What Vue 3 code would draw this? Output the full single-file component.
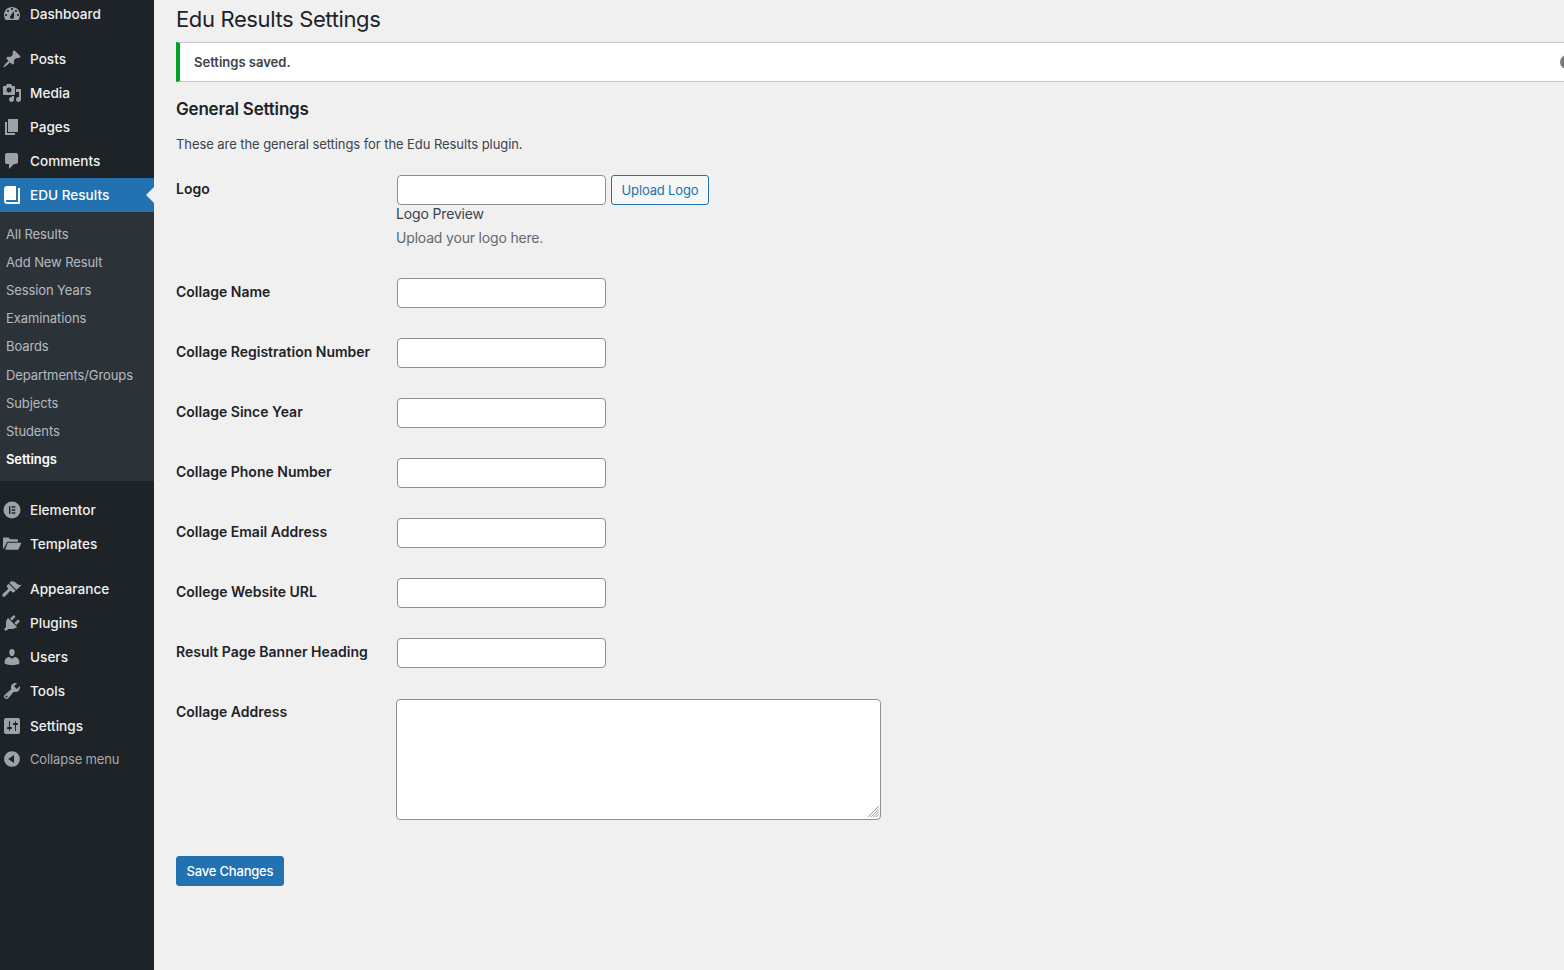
<script setup>
const icons = {
  dashboard: 'M3.76 16h12.48c1.1-1.37 1.76-3.11 1.76-5 0-4.42-3.58-8-8-8s-8 3.58-8 8c0 1.89.66 3.63 1.76 5zM10 4c.55 0 1 .45 1 1s-.45 1-1 1-1-.45-1-1 .45-1 1-1zM6 6c.55 0 1 .45 1 1s-.45 1-1 1-1-.45-1-1 .45-1 1-1zm8 0c.55 0 1 .45 1 1s-.45 1-1 1-1-.45-1-1 .45-1 1-1zm-5.37 5.55L12 7v6c0 1.1-.9 2-2 2s-2-.9-2-2c0-.57.24-1.08.63-1.45zM4 10c.55 0 1 .45 1 1s-.45 1-1 1-1-.45-1-1 .45-1 1-1zm12 0c.55 0 1 .45 1 1s-.45 1-1 1-1-.45-1-1 .45-1 1-1z',
  post: 'M10.44 3.02l1.82-1.82 6.36 6.35-1.83 1.82c-1.05-.68-2.48-.57-3.41.36l-.75.75c-.92.93-1.04 2.35-.35 3.41l-1.83 1.82-2.41-2.41-2.8 2.79c-.42.42-3.38 2.71-3.8 2.29s1.86-3.39 2.28-3.81l2.79-2.79L4.1 9.36l1.83-1.82c1.05.69 2.48.57 3.4-.36l.75-.75c.93-.92 1.05-2.35.36-3.41z',
  media: 'M13 11V4c0-.55-.45-1-1-1h-1.67L9 1H5L3.67 3H2c-.55 0-1 .45-1 1v7c0 .55.45 1 1 1h10c.55 0 1-.45 1-1zM7 4.5c1.38 0 2.5 1.12 2.5 2.5S8.38 9.5 7 9.5 4.5 8.38 4.5 7 5.62 4.5 7 4.5zM14 6h5v10.5c0 1.38-1.12 2.5-2.5 2.5S14 17.88 14 16.5s1.12-2.5 2.5-2.5c.17 0 .34.02.5.05V9h-3V6zm-4 8.05V13h2v3.5c0 1.38-1.12 2.5-2.5 2.5S7 17.88 7 16.5 8.12 14 9.5 14c.17 0 .34.02.5.05z',
  page: 'M6 15V2h10v13H6zm-1 1h8v2H3V5h2v11z',
  comments: 'M5 2h9c1.1 0 2 .9 2 2v7c0 1.1-.9 2-2 2h-2l-5 5v-5H5c-1.1 0-2-.9-2-2V4c0-1.1.9-2 2-2z',
  book: 'M16 3h2v16H5c-1.66 0-3-1.34-3-3V4c0-1.66 1.34-3 3-3h9v14H5c-.55 0-1 .45-1 1s.45 1 1 1h11V3z',
  elementor: 'M10 1.5a8.5 8.5 0 1 0 0 17 8.5 8.5 0 0 0 0-17zM7 6.3h1.4v7.4H7zM9.7 6.3h3.6v1.4H9.7zM9.7 9.3h3.6v1.4H9.7zM9.7 12.3h3.6v1.4H9.7z',
  folder: 'M1 4.5c0-.5.4-.9.9-.9h4.6l1.6 1.7h7c.5 0 .9.4.9.9v1.5H6.2c-.7 0-1.3.4-1.6 1L1.9 14.6c-.5-.1-.9-.5-.9-1zM6.3 8.7h12.2c.5 0 .8.5.6 1l-2.5 5.3c-.2.4-.6.7-1 .7H3.2l2.3-6.4c.1-.4.4-.6.8-.6z',
  appearance: 'M14.48 11.06L7.41 3.99l1.5-1.5c.5-.56 2.3-.47 3.51.32 1.21.8 1.43 1.28 2.91 2.1 1.18.64 2.45 1.26 4.45.85zm-.71.71L6.7 4.7 4.93 6.47c-.39.39-.39 1.02 0 1.41l1.06 1.06c.39.39.39 1.03 0 1.42-.6.6-5.7 4.5-5.7 5.9 0 .8.8 1.6 1.6 1.6 1.4 0 5.3-5.1 5.9-5.7.39-.39 1.03-.39 1.42 0l1.06 1.06c.39.39 1.02.39 1.41 0z',
  plugins: 'M13.11 4.36L9.87 7.6 8 5.73l3.24-3.24c.35-.34 1.05-.2 1.56.32.52.51.66 1.21.31 1.55zm-8 1.77l.91-1.12 9.01 9.01-1.19.84c-.71.71-2.63 1.16-3.82 1.16H6.14L4.9 17.26c-.59.59-1.54.59-2.12 0-.59-.58-.59-1.53 0-2.12l1.24-1.24v-3.88c0-1.13.4-3.19 1.09-3.89zm7.26 3.97l3.24-3.24c.34-.35 1.04-.21 1.55.31.52.51.66 1.21.31 1.55l-3.24 3.25z',
  users: 'M10 9.25c-2.27 0-2.73-3.44-2.73-3.44C7 4.02 7.82 2 9.97 2c2.16 0 2.98 2.02 2.71 3.81 0 0-.41 3.44-2.68 3.44zm0 2.57L12.72 10c2.39 0 4.52 2.33 4.52 4.53v2.49s-3.65 1.13-7.24 1.13c-3.65 0-7.24-1.13-7.24-1.13v-2.49c0-2.25 1.94-4.48 4.47-4.48z',
  tools: 'M16.68 9.77c-1.34 1.34-3.3 1.67-4.95.99l-5.41 6.52c-.99.99-2.59.99-3.58 0s-.99-2.59 0-3.57l6.52-5.42c-.68-1.65-.35-3.61.99-4.95 1.28-1.28 3.12-1.62 4.72-1.06l-2.89 2.89 2.82 2.82 2.86-2.87c.53 1.58.18 3.39-1.08 4.65zM3.81 16.21c.4.39 1.04.39 1.43 0 .4-.4.4-1.04 0-1.43-.39-.4-1.03-.4-1.43 0-.39.39-.39 1.03 0 1.43z',
  settings: 'M18 16V4c0-1.1-.9-2-2-2H4c-1.1 0-2 .9-2 2v12c0 1.1.9 2 2 2h12c1.1 0 2-.9 2-2zM8 11h1c.55 0 1 .45 1 1s-.45 1-1 1H8v1.5c0 .28-.22.5-.5.5s-.5-.22-.5-.5V13H6c-.55 0-1-.45-1-1s.45-1 1-1h1V5.5c0-.28.22-.5.5-.5s.5.22.5.5V11zm5-2h-1c-.55 0-1-.45-1-1s.45-1 1-1h1V5.5c0-.28.22-.5.5-.5s.5.22.5.5V7h1c.55 0 1 .45 1 1s-.45 1-1 1h-1v5.5c0 .28-.22.5-.5.5s-.5-.22-.5-.5V9z',
  collapse: 'M10 2.16c4.33 0 7.84 3.51 7.84 7.84s-3.51 7.84-7.84 7.84S2.16 14.33 2.16 10 5.71 2.16 10 2.16zm2 11.72V6.12L6.18 9.97z'
}

const groupOne = [{ label: 'Dashboard', icon: 'dashboard' }]
const groupTwo = [
  { label: 'Posts', icon: 'post' },
  { label: 'Media', icon: 'media' },
  { label: 'Pages', icon: 'page' },
  { label: 'Comments', icon: 'comments' }
]
const submenu = ['All Results', 'Add New Result', 'Session Years', 'Examinations', 'Boards', 'Departments/Groups', 'Subjects', 'Students', 'Settings']
const groupThree = [
  { label: 'Elementor', icon: 'elementor' },
  { label: 'Templates', icon: 'folder' }
]
const groupFour = [
  { label: 'Appearance', icon: 'appearance' },
  { label: 'Plugins', icon: 'plugins' },
  { label: 'Users', icon: 'users' },
  { label: 'Tools', icon: 'tools' },
  { label: 'Settings', icon: 'settings' }
]

const fields = [
  'Collage Name',
  'Collage Registration Number',
  'Collage Since Year',
  'Collage Phone Number',
  'Collage Email Address',
  'College Website URL',
  'Result Page Banner Heading'
]
</script>

<template>
  <div class="page">
    <aside class="sidebar">
      <ul class="menu first">
        <li v-for="item in groupOne" :key="item.label" class="menu-item">
          <svg class="icon" viewBox="0 0 20 20"><path :d="icons[item.icon]" fill-rule="evenodd" /></svg>
          <span>{{ item.label }}</span>
        </li>
      </ul>
      <ul class="menu sep">
        <li v-for="item in groupTwo" :key="item.label" class="menu-item">
          <svg class="icon" viewBox="0 0 20 20"><path :d="icons[item.icon]" fill-rule="evenodd" /></svg>
          <span>{{ item.label }}</span>
        </li>
        <li class="menu-item active">
          <svg class="icon" viewBox="0 0 20 20"><path :d="icons.book" /></svg>
          <span>EDU Results</span>
          <i class="arrow"></i>
        </li>
      </ul>
      <ul class="submenu">
        <li v-for="name in submenu" :key="name" :class="{ current: name === 'Settings' }">{{ name }}</li>
      </ul>
      <ul class="menu sep wide">
        <li v-for="item in groupThree" :key="item.label" class="menu-item">
          <svg class="icon" viewBox="0 0 20 20"><path :d="icons[item.icon]" fill-rule="evenodd" /></svg>
          <span>{{ item.label }}</span>
        </li>
      </ul>
      <ul class="menu sep">
        <li v-for="item in groupFour" :key="item.label" class="menu-item">
          <svg class="icon" viewBox="0 0 20 20"><path :d="icons[item.icon]" fill-rule="evenodd" /></svg>
          <span>{{ item.label }}</span>
        </li>
      </ul>
      <div class="collapse">
        <svg class="icon" viewBox="0 0 20 20"><path :d="icons.collapse" fill-rule="evenodd" /></svg>
        <span>Collapse menu</span>
      </div>
    </aside>

    <main class="content">
      <h1>Edu Results Settings</h1>
      <div class="notice">
        <p>Settings saved.</p>
        <i class="dismiss"></i>
      </div>
      <h2>General Settings</h2>
      <p class="intro">These are the general settings for the Edu Results plugin.</p>

      <form @submit.prevent>
        <div class="row">
          <label>Logo</label>
          <div>
            <div class="logo-line">
              <input type="text" />
              <button type="button" class="btn-secondary">Upload Logo</button>
            </div>
            <div class="preview">Logo Preview</div>
            <p class="description">Upload your logo here.</p>
          </div>
        </div>

        <div v-for="field in fields" :key="field" class="row">
          <label>{{ field }}</label>
          <div><input type="text" /></div>
        </div>

        <div class="row area-row">
          <label>Collage Address</label>
          <div class="area-wrap">
            <textarea></textarea>
            <svg class="grip" viewBox="0 0 14 14">
              <path d="M1 13L13 1M4 13L13 4M7 13L13 7M10 13L13 10" />
            </svg>
          </div>
        </div>

        <button type="submit" class="btn-primary">Save Changes</button>
      </form>
    </main>
  </div>
</template>

<style>
html, body {
  margin: 0;
  background: #f0f0f1;
}
</style>

<style scoped>
.page {
  display: flex;
  width: 1564px;
  height: 970px;
  overflow: hidden;
  background: #f0f0f1;
  font-family: Inter, "Liberation Sans", sans-serif;
  color: #3c434a;
  font-size: 13px;
}

.sidebar {
  flex: 0 0 154px;
  background: #1d2327;
  height: 970px;
}

ul {
  list-style: none;
  margin: 0;
  padding: 0;
}

.menu.first {
  margin-top: -3.5px;
}

.menu.sep {
  margin-top: 11px;
}

.menu.sep.wide {
  margin-top: 12px;
}

.menu-item {
  position: relative;
  display: flex;
  align-items: center;
  height: 34.15px;
  font-size: 13.6px;
  font-weight: 500;
  color: #f0f0f1;
}

.icon {
  flex: 0 0 20px;
  width: 20px;
  height: 20px;
  margin: 0 8px 0 2px;
  fill: #9ca2a7;
}

.menu-item.active {
  background: #2271b1;
  color: #fff;
}

.menu-item.active .icon {
  fill: #fff;
}

.arrow {
  position: absolute;
  right: 0;
  top: 9px;
  border: 8px solid transparent;
  border-right-color: #f0f0f1;
  border-left-width: 0;
}

.submenu {
  background: #2c3338;
  padding: 7.3px 0;
}

.submenu li {
  height: 28.2px;
  line-height: 28.2px;
  padding-left: 6px;
  font-size: 13px;
  letter-spacing: -0.1px;
  color: rgba(240, 246, 252, 0.7);
}

.submenu li.current {
  color: #fff;
  font-weight: 600;
}

.collapse {
  display: flex;
  align-items: center;
  height: 33px;
  font-size: 13px;
  letter-spacing: -0.15px;
  color: #a7aaad;
}

.content {
  flex: 1;
  min-width: 0;
  padding-left: 22px;
}

h1 {
  margin: 0;
  height: 42px;
  line-height: 38px;
  font-size: 22px;
  letter-spacing: -0.37px;
  font-weight: 400;
  color: #1d2327;
}

.notice {
  position: relative;
  box-sizing: border-box;
  width: 1420px;
  height: 40px;
  background: #fff;
  border: 1px solid #c3c4c7;
  border-left: 4px solid #00a32a;
  border-right: 0;
  padding: 0 14px;
  display: flex;
  align-items: center;
}

.notice p {
  margin: 0;
  font-size: 13px;
  font-weight: 600;
}

.dismiss {
  position: absolute;
  left: 1380px;
  top: 12px;
  width: 14px;
  height: 14px;
  border-radius: 50%;
  background: #787c82;
}

h2 {
  margin: 0;
  padding-top: 17px;
  line-height: 20px;
  font-size: 17px;
  letter-spacing: -0.19px;
  font-weight: 600;
  color: #1d2327;
}

.intro {
  margin: 0;
  padding-top: 15px;
  line-height: 20px;
  height: 26px;
  font-size: 13px;
  letter-spacing: -0.07px;
}

.row {
  display: grid;
  grid-template-columns: 220px 1fr;
  padding: 15px 0;
}

label {
  font-size: 14px;
  font-weight: 600;
  line-height: 28px;
  color: #1d2327;
}

input {
  box-sizing: border-box;
  display: block;
  width: 209px;
  height: 30px;
  margin: 0 0 0 1px;
  background: #fff;
  border: 1px solid #8c8f94;
  border-radius: 4px;
}

.logo-line {
  display: flex;
  gap: 5px;
}

.btn-secondary {
  box-sizing: border-box;
  height: 30px;
  width: 98px;
  padding: 0;
  background: #f6f7f7;
  border: 1px solid #2271b1;
  border-radius: 3px;
  color: #2271b1;
  font: 13px Inter, "Liberation Sans", sans-serif;
  letter-spacing: -0.15px;
}

.preview {
  margin-top: -1px;
  line-height: 20px;
  font-size: 14px;
  letter-spacing: -0.15px;
}

.description {
  margin: 4px 0 0;
  line-height: 20px;
  height: 20px;
  font-size: 14px;
  letter-spacing: -0.18px;
  color: #646970;
}

.area-row {
  padding-top: 16px;
}

.area-row label {
  line-height: 26px;
}

.area-wrap {
  position: relative;
}

textarea {
  box-sizing: border-box;
  display: block;
  width: 485px;
  height: 121px;
  margin: 0;
  background: #fff;
  border: 1px solid #8c8f94;
  border-radius: 4px;
  resize: none;
}

.grip {
  position: absolute;
  left: 471px;
  top: 106px;
  width: 13px;
  height: 13px;
  fill: none;
  stroke: #8c8f94;
  stroke-width: 1;
}

.btn-primary {
  display: block;
  box-sizing: border-box;
  margin-top: 21px;
  width: 108px;
  height: 30px;
  padding: 0;
  background: #2271b1;
  border: 1px solid #2271b1;
  border-radius: 3px;
  color: #fff;
  font: 500 13px Inter, "Liberation Sans", sans-serif;
  letter-spacing: -0.2px;
}
</style>
